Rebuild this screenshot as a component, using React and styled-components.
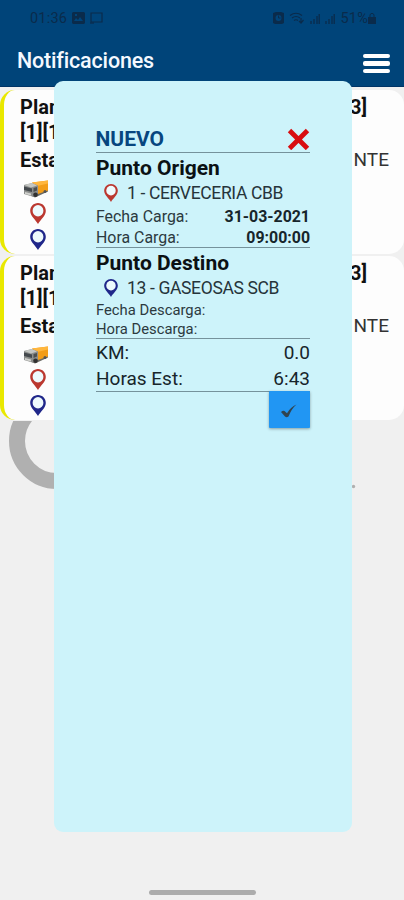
import React, { Component } from 'react'
import styled, { createGlobalStyle } from 'styled-components';

const GlobalStyle=createGlobalStyle`
  * {
    box-sizing: border-box;
  }

  body {
    margin: 0;
    background: #f0f0f0;
    font-family: Roboto, sans-serif;
    color: #111;
  }
`;

const Screen=styled.div`
  position: relative;
  display: flex;
  flex-direction: column;
  width: 404px;
  height: 900px;
  overflow: hidden;
  background: #f0f0f0;
`;

const Header=styled.header`
  flex: none;
  height: 87px;
  background: #004479;
  border-bottom: 1px solid #003466;
`;

const StatusBar=styled.div`
  display: flex;
  justify-content: space-between;
  align-items: center;
  height: 36px;
  padding: 0 28px 0 30px;
  color: #0a2b4b;
  font-size: 14.5px;
  letter-spacing: .2px;
`;

const StatusGroup=styled.div`
  display: flex;
  align-items: center;
  gap: ${props => props.$gap}px;
`;

const NavBar=styled.div`
  display: flex;
  justify-content: space-between;
  align-items: center;
  height: 48px;
  padding: 0 14px 0 17px;
`;

const Title=styled.h1`
  margin: 0;
  color: #f4f9ff;
  font-size: 21.5px;
  font-weight: 500;
  letter-spacing: -.18px;
`;

const MenuButton=styled.button`
  display: flex;
  flex-direction: column;
  gap: 3px;
  width: 27px;
  margin-top: 7px;
  padding: 0;
  border: 0;
  background: none;
`;

const MenuBar=styled.span`
  height: 4.5px;
  border-radius: 2px;
  background: #fff;
`;

const List=styled.main`
  display: flex;
  flex-direction: column;
  gap: 2px;
  padding-top: 3px;
`;

const Card=styled.article`
  height: 164px;
  padding: 5px 15px 0 16px;
  border-left: 4.5px solid #e9e800;
  border-radius: 15px;
  background: #fdfdfd;
`;

const CardRow=styled.div`
  display: flex;
  justify-content: space-between;
  height: ${props => props.$height}px;
  padding-right: ${props => props.$inset || 0}px;
  font-size: 20px;
  line-height: 25px;
  white-space: nowrap;
`;

const Strong=styled.span`
  font-weight: 700;
`;

const State=styled.span`
  color: #333;
  font-size: 19px;
  line-height: 23px;
`;

const CardIcons=styled.div`
  display: flex;
  flex-direction: column;
  align-items: center;
  gap: 5px;
  width: 36px;
`;

const Watermark=styled.svg`
  position: absolute;
  left: 0;
  top: 421px;
`;

const Modal=styled.section`
  position: absolute;
  left: 54px;
  top: 81px;
  width: 298px;
  height: 751px;
  padding: 43px 42px 0;
  border-radius: 9px;
  background: #cdf3fa;
`;

const Section=styled.div`
  border-bottom: 1px solid #75929b;
`;

const Row=styled.div`
  display: flex;
  justify-content: space-between;
  align-items: center;
  height: ${props => props.$height}px;
  font-size: ${props => props.$size}px;
  color: #17252b;
  white-space: nowrap;
`;

const Status=styled.h2`
  margin: 2px 0 0 -.5px;
  color: #07467f;
  font-size: 21px;
  font-weight: 700;
`;

const CloseButton=styled.button`
  display: flex;
  margin-top: 2px;
  padding: 0;
  border: 0;
  background: none;
`;

const Heading=styled.h3`
  height: 29px;
  margin: 0;
  padding-top: 1px;
  color: #0b1114;
  font-size: 21px;
  font-weight: 700;
  line-height: 29px;
`;

const Place=styled.div`
  display: flex;
  align-items: center;
  gap: 9px;
  height: 22px;
  margin-bottom: 1px;
  padding-left: 8px;
  color: #26343a;
  font-size: 17.5px;
  letter-spacing: -.35px;
  white-space: nowrap;
`;

const Label=styled.span`
  color: #2c3a40;
`;

const Actions=styled.div`
  display: flex;
  justify-content: flex-end;
`;

const AcceptButton=styled.button`
  display: flex;
  align-items: center;
  justify-content: center;
  width: 41px;
  height: 37px;
  margin-top: -1px;
  padding: 2px 1px 0 0;
  border: 0;
  border-radius: 1px;
  background: #2196f3;
  box-shadow: 0 1px 3px rgba(0, 0, 0, .35);
`;

const HomeBar=styled.div`
  position: absolute;
  left: 149px;
  bottom: 5px;
  width: 107px;
  height: 5px;
  border-radius: 3px;
  background: #acacac;
`;

const Pin=({ color, width, height }) => (
  <svg width={width} height={height} viewBox="0 0 16 20" preserveAspectRatio="none">
    <path fill={color} d="M8 0C3.600 0 .2 3.400 .2 7.600C.2 12.200 5.700 16 8 20C10.300 16 15.800 12.200 15.800 7.600C15.800 3.400 12.400 0 8 0Z" />
    <circle cx="8" cy="7.400" r="5.400" fill="#eefafd" />
  </svg>
)

const TruckSvg=styled.svg`
  margin-right: 5px;
`;

const Truck=() => (
  <TruckSvg width="26" height="18" viewBox="0 0 26 18">
    <path fill="#6b6b66" d="M2 13L12 17.500L25 11.500V8L12 12Z" />
    <path fill="#f39d18" d="M9 2.500L25 .5V10.500L15 14L12 7Z" />
    <path fill="#ffb63d" d="M9 2.500L25 .5V3.500L14 6Z" />
    <path fill="#8c8e8d" d="M1 5L9 3L15 5.500V14L11 17L1 14Z" />
    <path fill="#44494d" d="M1 6.500L9 8.500V12L1 10Z" />
    <path fill="#c4c6c3" d="M1 5L9 3L14 5.500L8 7.500Z" />
    <path fill="#4c4f50" d="M10.500 8L14 7V10.500L10.500 12Z" />
    <path fill="#d0d1cd" d="M2 12L8 13.500V15.500L2 14Z" />
    <circle cx="12.500" cy="14.800" r="2.300" fill="#303030" />
    <circle cx="22" cy="11.500" r="1.500" fill="#555" />
  </TruckSvg>
)

const PictureIcon=() => (
  <svg width="13" height="12" viewBox="0 0 13 12">
    <path fill="currentColor" fillRule="evenodd" d="M1 0H12L13 1V11L12 12H1L0 11V1ZM2 9H11L8 5L6 8L4 6ZM3 2V4H5V2Z" />
  </svg>
)

const CastIcon=() => (
  <svg width="13" height="12" viewBox="0 0 13 12" fill="none" stroke="currentColor" strokeWidth="1.200">
    <path d="M1 1H12V10H1Z" />
    <path d="M0 11H4" />
  </svg>
)

const AlarmIcon=() => (
  <svg width="11" height="12" viewBox="0 0 11 12">
    <path fill="currentColor" fillRule="evenodd" d="M0 1L3 0H8L11 1V11L9 12H2L0 11ZM5.500 3A3 3 0 1 0 5.500 9A3 3 0 1 0 5.500 3Z" />
    <path d="M5.500 3.500V6H7.500" fill="none" stroke="currentColor" />
  </svg>
)

const WifiIcon=() => (
  <svg width="16" height="12" viewBox="0 0 16 12" fill="none" stroke="currentColor" strokeWidth="1.200">
    <path d="M1 3.500Q7 -1 13 3.500M3 6Q7 3 11 6M5 8.500Q7 7 9 8.500M12 6V11M10 9L12 11L14.500 8" />
  </svg>
)

const SignalIcon=() => (
  <svg width="10" height="11" viewBox="0 0 10 11" stroke="currentColor" strokeWidth="1.300">
    <path d="M1 11V8M4 11V6M7 11V3M9.200 11V1" />
  </svg>
)

const BatteryIcon=() => (
  <svg width="8" height="12" viewBox="0 0 8 12">
    <path fill="none" stroke="currentColor" d="M2 6V2.500Q4 0 6 2.500V6" />
    <path fill="currentColor" d="M0 5H8V12H0Z" />
  </svg>
)

const Cross=() => (
  <svg width="23" height="22" viewBox="0 0 23 22">
    <path d="M2.500 2.500L20.500 20.500M20.500 2.500L2.500 20.500" stroke="#d80d10" strokeWidth="4.800" fill="none" />
  </svg>
)

const Check=() => (
  <svg width="16" height="14" viewBox="0 0 16 15" preserveAspectRatio="none">
    <path fill="#314451" d="M0 8.500Q2 6.500 3.500 7.500L6 10Q9.500 3 15.500 .5Q10.500 5 7.500 13.500Q5.500 15 4 13.500Z" />
  </svg>
)

const RED='#bb3830'
const BLUE='#20278a'

export default class Notificaciones extends Component {
  state = {
    plans: [1, 2],
    open: true
  }

  toggle = () => {
    this.setState({ open: !this.state.open })
  }

  render() {
    return(
      <Screen>
        <GlobalStyle />
        <Header>
          <StatusBar>
            <StatusGroup $gap={5}>
              <span>01:36</span>
              <PictureIcon />
              <CastIcon />
            </StatusGroup>
            <StatusGroup $gap={5}>
              <AlarmIcon />
              <WifiIcon />
              <SignalIcon />
              <SignalIcon />
              <StatusGroup $gap={0}>
                <span>51%</span>
                <BatteryIcon />
              </StatusGroup>
            </StatusGroup>
          </StatusBar>
          <NavBar>
            <Title>Notificaciones</Title>
            <MenuButton aria-label="Menu">
              <MenuBar /><MenuBar /><MenuBar />
            </MenuButton>
          </NavBar>
        </Header>
        <List>
          {this.state.plans.map((id)=> {
            return (
              <Card key={id}>
                <CardRow $height={25} $inset={22}><Strong>Plan</Strong><Strong>3]</Strong></CardRow>
                <CardRow $height={28}><Strong>[1][1</Strong></CardRow>
                <CardRow $height={32}><Strong>Esta</Strong><State>NTE</State></CardRow>
                <CardIcons>
                  <Truck />
                  <Pin color={RED} width={16} height={21} />
                  <Pin color={BLUE} width={16} height={21} />
                </CardIcons>
              </Card>
            )
          })}
        </List>
        <Watermark width="404" height="80" viewBox="0 421 404 80">
          <circle cx="57" cy="441" r="40" fill="none" stroke="#b0b0b0" strokeWidth="16" />
          <circle cx="353.500" cy="486.500" r="1.700" fill="#b0b0b0" />
        </Watermark>
        {this.state.open?<Modal>
          <Section>
            <Row $height={28}>
              <Status>NUEVO</Status>
              <CloseButton aria-label="Cerrar" onClick={this.toggle}><Cross /></CloseButton>
            </Row>
          </Section>
          <Section>
            <Heading>Punto Origen</Heading>
            <Place><Pin color={RED} width={14} height={18} />1 - CERVECERIA CBB</Place>
            <Row $height={22} $size={15.9}><Label>Fecha Carga:</Label><Strong>31-03-2021</Strong></Row>
            <Row $height={20} $size={15.9}><Label>Hora Carga:</Label><Strong>09:00:00</Strong></Row>
          </Section>
          <Section>
            <Heading>Punto Destino</Heading>
            <Place><Pin color={BLUE} width={14} height={18} />13 - GASEOSAS SCB</Place>
            <Row $height={19} $size={14.8}><Label>Fecha Descarga:</Label></Row>
            <Row $height={19} $size={14.8}><Label>Hora Descarga:</Label></Row>
          </Section>
          <Section>
            <Row $height={26} $size={19}><span>KM:</span><span>0.0</span></Row>
            <Row $height={26} $size={19}><span>Horas Est:</span><span>6:43</span></Row>
          </Section>
          <Actions>
            <AcceptButton aria-label="Aceptar" onClick={this.toggle}><Check /></AcceptButton>
          </Actions>
        </Modal>:''}
        <HomeBar />
      </Screen>
    )
  }
}
